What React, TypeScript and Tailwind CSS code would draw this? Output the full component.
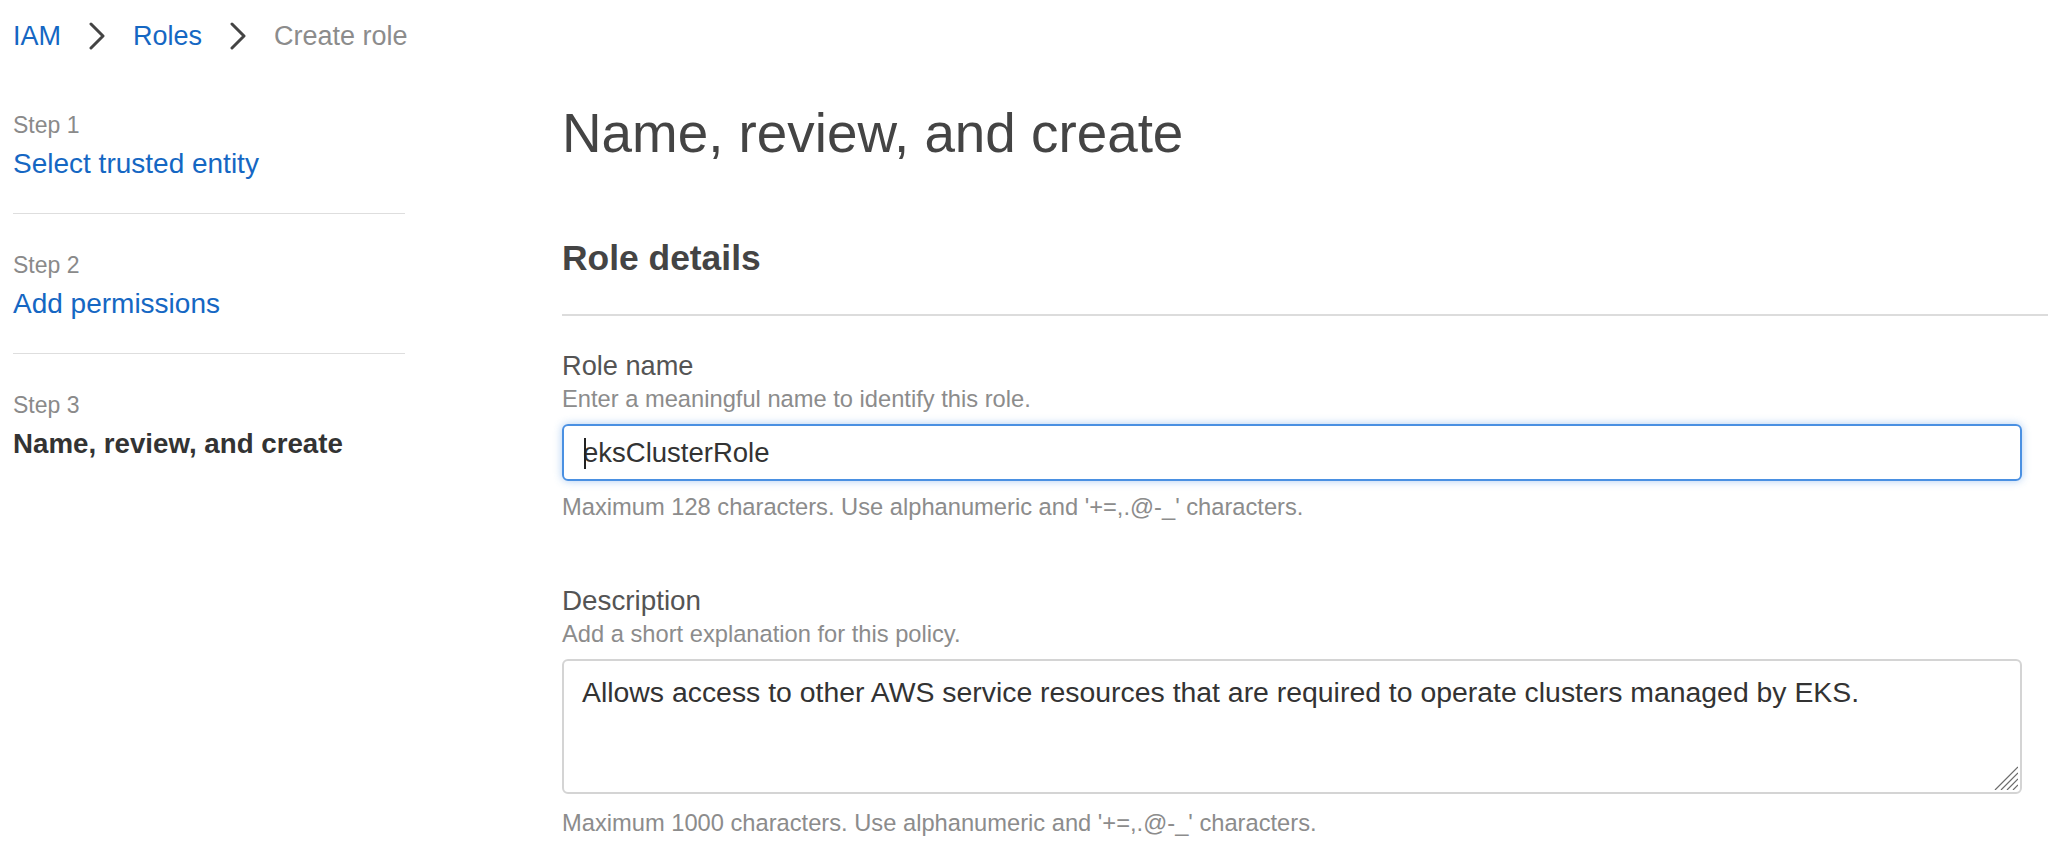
import React from 'react';

const steps = [
    { label: 'Step 1', title: 'Select trusted entity', current: false },
    { label: 'Step 2', title: 'Add permissions', current: false },
    { label: 'Step 3', title: 'Name, review, and create', current: true },
];

const Chevron = () => (
    <svg width="18" height="28" viewBox="0 0 18 28" fill="none">
        <polyline
            points="3,2 15,14 3,26"
            stroke="#444444"
            strokeWidth="3"
            strokeLinecap="round"
            strokeLinejoin="round"
        />
    </svg>
);

const ResizeGrip = () => (
    <svg
        width="24"
        height="24"
        viewBox="0 0 24 24"
        className="absolute bottom-[4px] right-[4px] pointer-events-none"
    >
        <line x1="24" y1="1" x2="1" y2="24" stroke="#6b6b6b" strokeWidth="1.2" />
        <line x1="24" y1="7" x2="7" y2="24" stroke="#6b6b6b" strokeWidth="1.2" />
        <line x1="24" y1="13" x2="13" y2="24" stroke="#6b6b6b" strokeWidth="1.2" />
        <line x1="24" y1="19" x2="19" y2="24" stroke="#6b6b6b" strokeWidth="1.2" />
    </svg>
);

const App = () => {
    return (
        <div className="min-h-screen bg-white pl-[13px] font-['Liberation_Sans',Arial,sans-serif] text-[#444444]">
            {/* breadcrumb */}
            <nav className="flex items-center gap-[27px] pt-[18px] h-[54px] text-[27px] leading-[36px]">
                <a className="text-[#1567c3]">IAM</a>
                <Chevron />
                <a className="text-[#1567c3]">Roles</a>
                <Chevron />
                <span className="text-[#8c8c8c]">Create role</span>
            </nav>

            <div className="flex">
                {/* wizard steps */}
                <aside className="w-[392px] shrink-0 pt-[57px]">
                    {steps.map((s, i) => (
                        <div
                            key={s.label}
                            className={
                                i < steps.length - 1
                                    ? 'pb-[32px] border-b border-[#dedede] mb-[37px]'
                                    : ''
                            }
                        >
                            <div className="text-[23px] leading-[28px] text-[#8a8a8a]">
                                {s.label}
                            </div>
                            <div
                                className={
                                    s.current
                                        ? 'mt-[8px] text-[27.7px] leading-[34px] font-bold text-[#333333]'
                                        : 'mt-[8px] text-[28px] leading-[34px] text-[#1567c3]'
                                }
                            >
                                {s.title}
                            </div>
                        </div>
                    ))}
                </aside>

                {/* main form */}
                <main className="flex-1 ml-[157px] pt-[47px] pr-[26px]">
                    <h1 className="text-[54.8px] leading-[64px] text-[#444444]">
                        Name, review, and create
                    </h1>

                    <div className="mt-[73px] -mr-[26px] pb-[36px] border-b-2 border-[#dcdcdc]">
                        <h2 className="text-[35.4px] leading-[40px] font-bold text-[#444444]">
                            Role details
                        </h2>
                    </div>

                    <div className="mt-[34px]">
                        <label className="block text-[27.2px] leading-[32px] text-[#545454]">
                            Role name
                        </label>
                        <div className="mt-[3px] text-[23.7px] leading-[28px] text-[#8c8c8c]">
                            Enter a meaningful name to identify this role.
                        </div>
                        <div className="relative mt-[11px]">
                            <input
                                defaultValue="eksClusterRole"
                                className="w-full h-[57px] rounded-[6px] border-2 border-[#4a90e2] pl-[19px] text-[27.5px] text-[#333333] outline-none caret-transparent shadow-[0_0_9px_rgba(74,144,226,0.45)]"
                            />
                            <span className="absolute left-[22px] top-[14px] h-[31px] w-[2px] bg-[#222222]" />
                        </div>
                        <div className="mt-[12px] text-[23.7px] leading-[28px] text-[#8c8c8c]">
                            Maximum 128 characters. Use alphanumeric and '+=,.@-_' characters.
                        </div>
                    </div>

                    <div className="mt-[64px]">
                        <label className="block text-[27.8px] leading-[32px] text-[#545454]">
                            Description
                        </label>
                        <div className="mt-[3px] text-[23.7px] leading-[28px] text-[#8c8c8c]">
                            Add a short explanation for this policy.
                        </div>
                        <div className="relative mt-[11px]">
                            <textarea
                                defaultValue="Allows access to other AWS service resources that are required to operate clusters managed by EKS."
                                className="block w-full h-[135px] resize-none rounded-[6px] border-2 border-[#d4d4d4] pl-[18px] pt-[14px] text-[28.4px] leading-[34px] text-[#333333] outline-none"
                            />
                            <ResizeGrip />
                        </div>
                        <div className="mt-[15px] text-[23.7px] leading-[28px] text-[#8c8c8c]">
                            Maximum 1000 characters. Use alphanumeric and '+=,.@-_' characters.
                        </div>
                    </div>
                </main>
            </div>
        </div>
    );
};

export default App;
